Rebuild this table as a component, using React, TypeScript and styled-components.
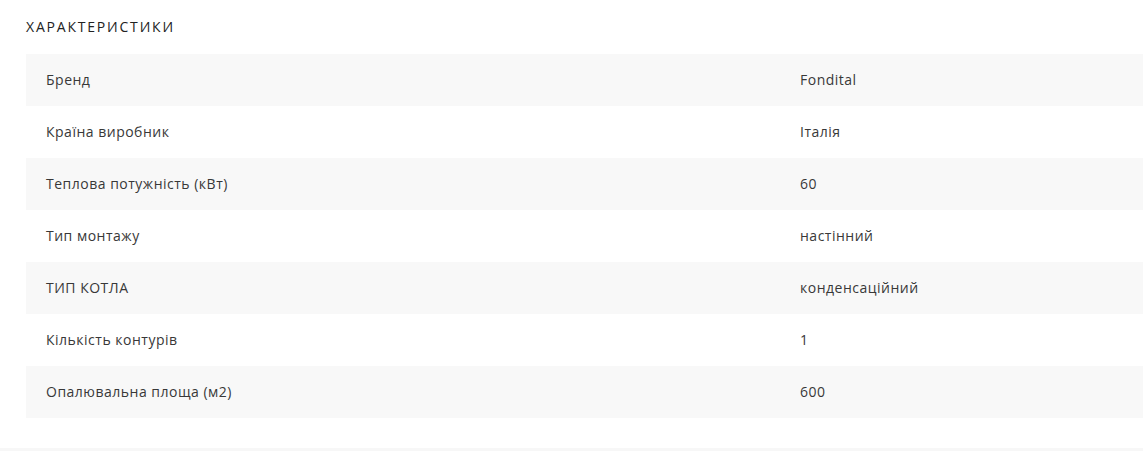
import styled, { createGlobalStyle } from "styled-components";

const GlobalStyle = createGlobalStyle`
  html, body {
    margin: 0;
    padding: 0;
    background: #fff;
  }
  body {
    font-family: "Open Sans", "Noto Sans", sans-serif;
    color: #333;
  }
`;

const specs: [string, string][] = [
  ["Бренд", "Fondital"],
  ["Країна виробник", "Італія"],
  ["Теплова потужність (кВт)", "60"],
  ["Тип монтажу", "настінний"],
  ["ТИП КОТЛА", "конденсаційний"],
  ["Кількість контурів", "1"],
  ["Опалювальна площа (м2)", "600"],
];

const Section = styled.section`
  padding: 17px 0 30px 26px;
  border-bottom: 3px solid #f7f7f7;
`;

const Title = styled.h3`
  margin: 0 0 17px;
  font-size: 14px;
  font-weight: 500;
  line-height: 20px;
  color: #222;
  letter-spacing: 1.8px;
  text-transform: uppercase;
`;

const Table = styled.div`
  display: flex;
  flex-direction: column;
`;

const Row = styled.div<{ $shade: boolean }>`
  display: grid;
  grid-template-columns: 774px 1fr;
  height: 52px;
  align-items: center;
  padding-bottom: 1px;
  box-sizing: border-box;
  background: ${(p) => (p.$shade ? "#f8f8f8" : "#fff")};
`;

const Label = styled.span`
  padding-left: 20px;
  font-size: 14px;
  letter-spacing: 0.5px;
  color: #383838;
`;

const Value = styled.span`
  font-size: 14px;
  letter-spacing: 0.5px;
  color: #383838;
`;

export default function App() {
  return (
    <>
      <GlobalStyle />
      <Section>
        <Title>Характеристики</Title>
        <Table>
          {specs.map(([k, v], i) => (
            <Row key={k} $shade={i % 2 === 0}>
              <Label>{k}</Label>
              <Value>{v}</Value>
            </Row>
          ))}
        </Table>
      </Section>
    </>
  );
}
